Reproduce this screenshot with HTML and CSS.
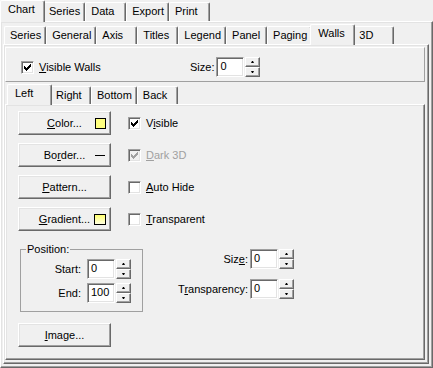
FILE: index.html
```html
<!DOCTYPE html>
<html lang="en">
<head>
    <meta charset="UTF-8">
    <title>Chart Editor - Walls</title>
    <link rel="stylesheet" href="styles.css">
</head>
<body>
    <div class="tabctl outer">
        <div class="tabrow row-main">
            <span class="tab active">Chart</span>
            <span class="tab">Series</span>
            <span class="tab">Data</span>
            <span class="tab">Export</span>
            <span class="tab">Print</span>
        </div>
        <div class="tabpage outer-page">
            <div class="tabctl">
                <div class="tabrow row-chart">
                    <span class="tab">Series</span>
                    <span class="tab">General</span>
                    <span class="tab">Axis</span>
                    <span class="tab">Titles</span>
                    <span class="tab">Legend</span>
                    <span class="tab">Panel</span>
                    <span class="tab">Paging</span>
                    <span class="tab active">Walls</span>
                    <span class="tab">3D</span>
                </div>
                <div class="tabpage walls-page">
                    <!-- Верхняя панель -->
                    <div class="top-panel">
                        <label class="check visible-walls">
                            <span class="cb"><svg width="7" height="7" viewBox="0 0 7 7"><path d="M0 2h1v3H0zM1 3h1v3H1zM2 4h1v3H2zM3 3h1v3H3zM4 2h1v3H4zM5 1h1v3H5zM6 0h1v3H6z"/></svg></span>
                            <span><u>V</u>isible Walls</span>
                        </label>
                        <div class="spin-field">
                            <span class="lbl">Size:</span>
                            <span class="edit">0</span>
                            <span class="spin"><span class="spin-btn"><i class="up"></i></span><span class="spin-btn"><i class="down"></i></span></span>
                        </div>
                    </div>

                    <div class="tabctl sub">
                        <div class="tabrow row-sub">
                            <span class="tab active">Left</span>
                            <span class="tab">Right</span>
                            <span class="tab">Bottom</span>
                            <span class="tab">Back</span>
                        </div>
                        <div class="tabpage wall-page">
                            <div class="btn-grid">
                                <button class="btn"><span class="txt"><u>C</u>olor...</span><span class="swatch"></span></button>
                                <label class="check">
                                    <span class="cb"><svg width="7" height="7" viewBox="0 0 7 7"><path d="M0 2h1v3H0zM1 3h1v3H1zM2 4h1v3H2zM3 3h1v3H3zM4 2h1v3H4zM5 1h1v3H5zM6 0h1v3H6z"/></svg></span>
                                    <span>V<u>i</u>sible</span>
                                </label>

                                <button class="btn"><span class="txt">Bo<u>r</u>der...</span><span class="dash"></span></button>
                                <label class="check disabled">
                                    <span class="cb"><svg width="7" height="7" viewBox="0 0 7 7"><path d="M0 2h1v3H0zM1 3h1v3H1zM2 4h1v3H2zM3 3h1v3H3zM4 2h1v3H4zM5 1h1v3H5zM6 0h1v3H6z"/></svg></span>
                                    <span><u>D</u>ark 3D</span>
                                </label>

                                <button class="btn"><span class="txt"><u>P</u>attern...</span></button>
                                <label class="check">
                                    <span class="cb"></span>
                                    <span><u>A</u>uto Hide</span>
                                </label>

                                <button class="btn"><span class="txt"><u>G</u>radient...</span><span class="swatch gradient"></span></button>
                                <label class="check">
                                    <span class="cb"></span>
                                    <span><u>T</u>ransparent</span>
                                </label>
                            </div>

                            <div class="lower">
                                <fieldset class="group">
                                    <legend>Position:</legend>
                                    <div class="rows">
                                        <div class="spin-field">
                                            <span class="lbl pos-lbl">Start:</span>
                                            <span class="edit">0</span>
                                            <span class="spin"><span class="spin-btn"><i class="up"></i></span><span class="spin-btn"><i class="down"></i></span></span>
                                        </div>
                                        <div class="spin-field">
                                            <span class="lbl pos-lbl">End:</span>
                                            <span class="edit">100</span>
                                            <span class="spin"><span class="spin-btn"><i class="up"></i></span><span class="spin-btn"><i class="down"></i></span></span>
                                        </div>
                                    </div>
                                </fieldset>

                                <div class="rows right-fields">
                                    <div class="spin-field">
                                        <span class="lbl side-lbl">Siz<u>e</u>:</span>
                                        <span class="edit">0</span>
                                        <span class="spin"><span class="spin-btn"><i class="up"></i></span><span class="spin-btn"><i class="down"></i></span></span>
                                    </div>
                                    <div class="spin-field">
                                        <span class="lbl side-lbl">T<u>r</u>ansparency:</span>
                                        <span class="edit">0</span>
                                        <span class="spin"><span class="spin-btn"><i class="up"></i></span><span class="spin-btn"><i class="down"></i></span></span>
                                    </div>
                                </div>
                            </div>

                            <button class="btn image-btn"><span class="txt"><u>I</u>mage...</span></button>
                        </div>
                    </div>
                </div>
            </div>
        </div>
    </div>
</body>
</html>
```

FILE: styles.css
```css
body {
    margin: 0;
    background-color: #f0f0f0;
    font-family: "Liberation Sans", Arial, sans-serif;
    font-size: 11px;
    line-height: 13px;
    color: #000;
}

/* Вкладки */
.tabctl {
    display: flex;
    flex-direction: column;
}

.outer {
    width: 433px;
    height: 368px;
}

.tabctl > .tabpage {
    flex: 1;
}

.tabrow {
    display: flex;
    align-items: flex-end;
    height: 20px;
    flex-shrink: 0;
}

.row-main {
    height: 21px;
    padding-left: 2px;
}

.row-chart {
    padding-left: 1px;
}

.row-sub {
    padding-left: 4px;
}

.tab {
    box-sizing: border-box;
    height: 18px;
    min-width: 41px;
    padding: 2px 4px 0 5px;
    border: 1px solid #fff;
    border-right-color: #696969;
    border-bottom: none;
    border-radius: 2px 2px 0 0;
    box-shadow: inset -1px 0 #a0a0a0;
    background-color: #f0f0f0;
    white-space: nowrap;
}

.row-main .tab {
    height: 19px;
}

.tab.active {
    position: relative;
    z-index: 1;
    height: 21px;
    min-width: 45px;
    margin: 0 -2px -1px;
    padding-left: 7px;
    padding-right: 6px;
}

.row-main .tab.active {
    height: 22px;
}

.tabpage {
    box-sizing: border-box;
    border: 1px solid;
    border-color: #fff #696969 #696969 #fff;
    box-shadow: inset -1px -1px #a0a0a0, inset 1px 1px #e3e3e3;
    background-color: #f0f0f0;
}

.outer-page {
    display: flex;
    flex-direction: column;
    padding: 2px 3px 3px 2px;
}

.outer-page > .tabctl {
    flex: 1;
}

.walls-page {
    display: flex;
    flex-direction: column;
    padding: 2px 3px 3px 1px;
}

.sub {
    flex: 1;
    margin-top: 2px;
}

/* Верхняя панель */
.top-panel {
    box-sizing: border-box;
    height: 35px;
    flex-shrink: 0;
    display: flex;
    align-items: center;
    padding: 5px 0 0 15px;
    border: 1px solid;
    border-color: #fff #a0a0a0 #a0a0a0 #fff;
}

.visible-walls {
    width: 169px;
}

/* Чекбоксы */
.check {
    display: flex;
    align-items: center;
    gap: 5px;
}

.cb {
    box-sizing: border-box;
    width: 13px;
    height: 13px;
    display: flex;
    align-items: center;
    justify-content: center;
    border: 1px solid;
    border-color: #a0a0a0 #fff #fff #a0a0a0;
    box-shadow: inset 1px 1px #696969, inset -1px -1px #e3e3e3;
    background-color: #fff;
}

.cb svg {
    display: block;
    shape-rendering: crispEdges;
    fill: #000;
}

.disabled {
    color: #a0a0a0;
}

.disabled .cb {
    background-color: #f0f0f0;
}

.disabled .cb svg {
    fill: #a0a0a0;
}

/* Поля со счётчиком */
.spin-field {
    display: flex;
    align-items: center;
}

.lbl {
    margin-right: 2px;
    white-space: nowrap;
}

.pos-lbl {
    width: 60px;
    margin-right: 6px;
    text-align: right;
}

.side-lbl {
    width: 97px;
    text-align: right;
}

.edit {
    box-sizing: border-box;
    width: 28px;
    height: 20px;
    padding: 2px 0 0 3px;
    border: 1px solid;
    border-color: #a0a0a0 #fff #fff #a0a0a0;
    box-shadow: inset 1px 1px #696969, inset -1px -1px #e3e3e3;
    background-color: #fff;
}

.spin {
    display: flex;
    flex-direction: column;
    width: 15px;
    height: 20px;
    margin-left: 1px;
}

.spin-btn {
    box-sizing: border-box;
    flex: 1;
    display: flex;
    align-items: center;
    justify-content: center;
    border: 1px solid;
    border-color: #fff #696969 #696969 #fff;
    box-shadow: inset -1px -1px #a0a0a0;
    background-color: #f0f0f0;
}

.up,
.down {
    display: block;
    width: 1px;
    height: 0;
    border-left: 1px solid transparent;
    border-right: 1px solid transparent;
}

.up {
    border-bottom: 2px solid #000;
}

.down {
    border-top: 2px solid #000;
}

/* Страница Left */
.wall-page {
    padding: 6px 0 0 12px;
}

.btn-grid {
    display: grid;
    grid-template-columns: 93px auto;
    grid-auto-rows: 24px;
    row-gap: 8px;
    column-gap: 17px;
    align-items: center;
}

.btn {
    box-sizing: border-box;
    width: 93px;
    height: 24px;
    display: grid;
    grid-template-columns: 1fr auto 1fr;
    align-items: center;
    padding: 0 4px;
    border: 1px solid;
    border-color: #fff #696969 #696969 #fff;
    box-shadow: inset -1px -1px #a0a0a0, inset 1px 1px #e3e3e3;
    background-color: #f0f0f0;
    font: inherit;
    color: #000;
}

.btn .txt {
    grid-column: 2;
    white-space: nowrap;
}

.swatch {
    grid-column: 3;
    justify-self: end;
    box-sizing: border-box;
    width: 11px;
    height: 11px;
    border: 1px solid #000;
    background-color: #ffff80;
}

.swatch.gradient {
    width: 12px;
    background: linear-gradient(#ffff70, #ffffe0);
}

.dash {
    grid-column: 3;
    justify-self: end;
    width: 10px;
    height: 1px;
    margin-right: 1px;
    background-color: #000;
}

.lower {
    display: flex;
    align-items: flex-start;
    margin-top: 12px;
}

.group {
    box-sizing: border-box;
    width: 123px;
    margin: 0 0 0 2px;
    padding: 3px 0 8px 0;
    border: 1px solid #a0a0a0;
}

.group legend {
    margin-left: 5px;
    padding: 0 1px;
}

.rows {
    display: flex;
    flex-direction: column;
    gap: 4px;
}

.right-fields {
    margin: 6px 0 0 8px;
    gap: 10px;
}

.image-btn {
    margin-top: 11px;
}
```
